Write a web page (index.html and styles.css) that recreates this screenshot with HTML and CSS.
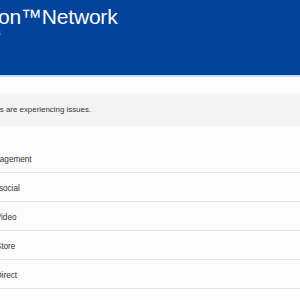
FILE: index.html
```html
<!DOCTYPE html>
<html lang="en">
<head>
  <meta charset="UTF-8">
  <meta name="viewport" content="width=device-width, initial-scale=1.0">
  <title>PlayStation™Network Service Status</title>
  <link rel="stylesheet" href="styles.css">
</head>
<body>
  <div class="page">
    <header class="top">
      <h1>PlayStation™Network</h1>
      <p class="sub">Service Status Updates</p>
    </header>

    <div class="notice">Some services are experiencing issues.</div>

    <ul class="services">
      <li>Account management</li>
      <li>Gaming and social</li>
      <li>PlayStation Video</li>
      <li>PlayStation Store</li>
      <li>PlayStation Direct</li>
    </ul>
  </div>
</body>
</html>
```

FILE: styles.css
```css
* {
  box-sizing: border-box;
}
html, body {
  margin: 0;
  padding: 0;
  overflow: hidden;
}
body {
  font-family: 'Liberation Sans', Arial, sans-serif;
  background: #fcfcfc;
  color: #333;
}
.page {
  margin-left: -90px;
  width: 390px;
}
.top {
  background: #00439c;
  color: #fff;
  height: 77px;
  padding: 6px 0 0 7px;
  border-bottom: 2px solid #c9dcf2;
}
.top h1 {
  margin: 0;
  font-size: 21px;
  line-height: 22px;
  font-weight: normal;
  letter-spacing: -0.2px;
}
.sub {
  margin: 0;
  font-size: 7.5px;
  line-height: 9px;
  font-weight: bold;
}
.notice {
  margin-top: 17px;
  height: 31px;
  line-height: 32px;
  padding-left: 42px;
  background: #f4f4f4;
  box-shadow: 0 1px 2px rgba(0, 0, 0, 0.05);
  font-size: 7.9px;
}
.services {
  list-style: none;
  margin: 19px 0 0;
  padding: 0;
}
.services li {
  height: 29px;
  line-height: 31px;
  padding-left: 42px;
  border-bottom: 1px solid #e6e6e6;
  font-size: 8.2px;
}
```
